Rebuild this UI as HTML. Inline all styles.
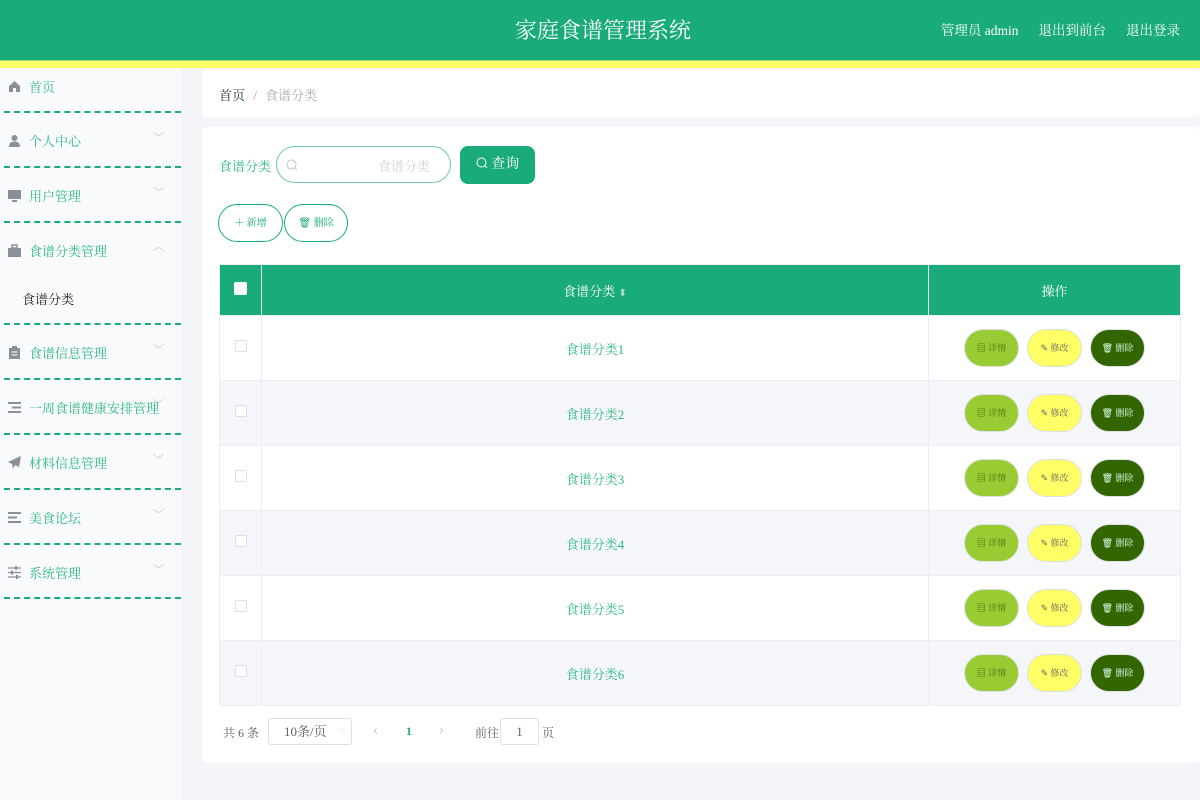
<!DOCTYPE html>
<html><head><meta charset="utf-8"><style>
*{box-sizing:border-box;margin:0;padding:0}
body{width:1200px;height:800px;overflow:hidden;background:#f4f5f8;font-family:"Liberation Serif","Noto Serif CJK SC","Noto Sans CJK SC",serif;position:relative}
.hd{position:absolute;left:0;top:0;width:1200px;height:60px;background:#1aab7b;color:#fff}
.hd .t{position:absolute;left:0;width:1206px;text-align:center;top:14px;font-size:22px}
.hd .r{position:absolute;right:20px;top:19px;font-size:13.5px}
.hd .r span{margin-left:20px}
.ys{position:absolute;top:60px;left:0;width:1200px;height:8px;background:#ffff66;border-top:1px solid #9cd66e}
.sb{position:absolute;left:0;top:68px;width:181px;height:732px;background:#f9fafb}
.it{position:absolute;left:0;width:181px;height:20px;font-size:13px;color:#2fb886}
.it .ic{position:absolute;left:8px;top:2px;width:13px;height:13px}
.it .tx{position:absolute;left:29px;top:-1px}
.it .ch{position:absolute;left:154px;top:-2px;color:#aaa;font-size:9px;transform:scaleX(1.3)}
.dl{position:absolute;left:4px;width:177px;border-top:2px dashed #1aab7b}
.card{position:absolute;background:#fff;border-radius:4px}
.lbl{position:absolute;font-size:13px}
table{border-collapse:collapse;position:absolute;left:219px;top:264px;width:962px;font-size:13px}
td,th{border:1px solid #ebeef5;text-align:center}
th{background:#1aab7b;color:#fff;height:51px;font-weight:normal}
td{height:65px;color:#2fb886}
tr:nth-child(odd) td{background:#f4f6fa}
.cb{display:inline-block;width:12px;height:12px;border:1px solid #dcdfe6;border-radius:2px;background:#fff}
.b{display:inline-block;width:55px;height:38px;border-radius:19px;line-height:36px;font-size:9px;margin:0 4px;border:1px solid #dcdfe6;vertical-align:middle}
</style></head><body>
<div class="hd"><div class="t">家庭食谱管理系统</div><div class="r"><span>管理员 admin</span><span>退出到前台</span><span>退出登录</span></div></div>
<div class="ys"></div>
<div class="sb"></div>
<div class="it" style="top:78px"><svg class="ic" viewBox="0 0 13 13"><path d="M1 6L6.5 1 12 6V12H8V8H5V12H1Z" fill="#8a8f99"/></svg><span class="tx">首页</span></div>
<div class="dl" style="top:111px"></div>
<div class="it" style="top:132px"><svg class="ic" viewBox="0 0 13 13"><circle cx="6.5" cy="4" r="3" fill="#8a8f99"/><path d="M1 13Q1 7.5 6.5 7.5 12 7.5 12 13Z" fill="#8a8f99"/></svg><span class="tx">个人中心</span><span class="ch">﹀</span></div>
<div class="dl" style="top:166px"></div>
<div class="it" style="top:187px"><svg class="ic" viewBox="0 0 13 13"><rect x="0" y="1" width="13" height="9" fill="#8a8f99"/><rect x="4" y="11" width="5" height="2" fill="#8a8f99"/></svg><span class="tx">用户管理</span><span class="ch">﹀</span></div>
<div class="dl" style="top:221px"></div>
<div class="it" style="top:242px"><svg class="ic" viewBox="0 0 13 13"><rect x="0" y="4" width="13" height="9" fill="#8a8f99"/><rect x="4" y="1" width="5" height="3" fill="none" stroke="#8a8f99" stroke-width="1.5"/></svg><span class="tx">食谱分类管理</span><span class="ch">︿</span></div>
<div class="it" style="top:290px;color:#222"><span class="tx" style="left:22px">食谱分类</span></div>
<div class="dl" style="top:323px"></div>
<div class="it" style="top:344px"><svg class="ic" viewBox="0 0 13 13"><rect x="1" y="2" width="11" height="11" fill="#8a8f99"/><rect x="4" y="0" width="5" height="3" fill="#8a8f99"/><path d="M3.5 6H9.5M3.5 9H9.5" stroke="#fff"/></svg><span class="tx">食谱信息管理</span><span class="ch">﹀</span></div>
<div class="dl" style="top:378px"></div>
<div class="it" style="top:399px"><svg class="ic" viewBox="0 0 13 13"><path d="M0 2H13M4 6.5H13M0 11H13" stroke="#8a8f99" stroke-width="2"/></svg><span class="tx">一周食谱健康安排管理</span><span class="ch">﹀</span></div>
<div class="dl" style="top:433px"></div>
<div class="it" style="top:454px"><svg class="ic" viewBox="0 0 13 13"><path d="M13 0L0 6 4 8 5 13 7 9 11 11Z" fill="#8a8f99"/></svg><span class="tx">材料信息管理</span><span class="ch">﹀</span></div>
<div class="dl" style="top:488px"></div>
<div class="it" style="top:509px"><svg class="ic" viewBox="0 0 13 13"><path d="M0 2H13M0 6.5H9M0 11H13" stroke="#8a8f99" stroke-width="2"/></svg><span class="tx">美食论坛</span><span class="ch">﹀</span></div>
<div class="dl" style="top:543px"></div>
<div class="it" style="top:564px"><svg class="ic" viewBox="0 0 13 13"><path d="M0 2H13M0 6.5H13M0 11H13" stroke="#8a8f99" stroke-width="1.3"/><path d="M8 0V4M4 4.5V8.5M9 9V13" stroke="#8a8f99" stroke-width="2"/></svg><span class="tx">系统管理</span><span class="ch">﹀</span></div>
<div class="dl" style="top:597px"></div>

<div class="card" style="left:202px;top:70px;width:998px;height:47px"></div>
<div class="lbl" style="left:219px;top:85px;color:#303133">首页 <span style="color:#f56c6c;margin:0 5px">/</span> <span style="color:#a8abb2">食谱分类</span></div>
<div class="card" style="left:202px;top:127px;width:998px;height:636px"></div>
<div class="lbl" style="left:219px;top:156px;color:#2fb886">食谱分类</div>
<div style="position:absolute;left:276px;top:146px;width:175px;height:37px;border:1px solid #6fcaa8;border-radius:19px;background:#fff"><svg style="position:absolute;left:9px;top:12px" width="12" height="12" viewBox="0 0 12 12"><circle cx="5.5" cy="5.5" r="4.5" fill="none" stroke="#c0c4cc"/><path d="M9 9L11 11" stroke="#c0c4cc"/></svg><span style="position:absolute;left:101px;top:9px;font-size:13px;color:#d0d3d9">食谱分类</span></div>
<div style="position:absolute;left:460px;top:146px;width:75px;height:38px;background:#1aab7b;border-radius:8px;color:#fff;font-size:14px;line-height:38px;text-align:center"><svg width="12" height="12" viewBox="0 0 12 12" style="vertical-align:-1px"><circle cx="5.5" cy="5.5" r="4.5" fill="none" stroke="#fff"/><path d="M9 9L11 11" stroke="#fff"/></svg> 查询</div>
<div style="position:absolute;left:218px;top:204px;width:65px;height:38px;border:1px solid #1aab7b;border-radius:19px;color:#1aab7b;font-size:10px;line-height:38px;text-align:center;background:#fff">＋ 新增</div>
<div style="position:absolute;left:284px;top:204px;width:64px;height:38px;border:1px solid #1aab7b;border-radius:19px;color:#1aab7b;font-size:10px;line-height:38px;text-align:center;background:#fff">🗑 删除</div>

<table>
<tr><th style="width:42px"><span class="cb" style="width:13px;height:13px;border:none"></span></th><th style="width:667px">食谱分类 <span style="color:#b5e0cf;font-size:10px">⬍</span></th><th>操作</th></tr>
<tr><td><span class="cb"></span></td><td>食谱分类1</td><td><span class="b" style="background:#99cc33;color:#4a6b14">▤ 详情</span><span class="b" style="background:#ffff66;color:#666">✎ 修改</span><span class="b" style="background:#336600;color:#dfe">🗑 删除</span></td></tr>
<tr><td><span class="cb"></span></td><td>食谱分类2</td><td><span class="b" style="background:#99cc33;color:#4a6b14">▤ 详情</span><span class="b" style="background:#ffff66;color:#666">✎ 修改</span><span class="b" style="background:#336600;color:#dfe">🗑 删除</span></td></tr>
<tr><td><span class="cb"></span></td><td>食谱分类3</td><td><span class="b" style="background:#99cc33;color:#4a6b14">▤ 详情</span><span class="b" style="background:#ffff66;color:#666">✎ 修改</span><span class="b" style="background:#336600;color:#dfe">🗑 删除</span></td></tr>
<tr><td><span class="cb"></span></td><td>食谱分类4</td><td><span class="b" style="background:#99cc33;color:#4a6b14">▤ 详情</span><span class="b" style="background:#ffff66;color:#666">✎ 修改</span><span class="b" style="background:#336600;color:#dfe">🗑 删除</span></td></tr>
<tr><td><span class="cb"></span></td><td>食谱分类5</td><td><span class="b" style="background:#99cc33;color:#4a6b14">▤ 详情</span><span class="b" style="background:#ffff66;color:#666">✎ 修改</span><span class="b" style="background:#336600;color:#dfe">🗑 删除</span></td></tr>
<tr><td><span class="cb"></span></td><td>食谱分类6</td><td><span class="b" style="background:#99cc33;color:#4a6b14">▤ 详情</span><span class="b" style="background:#ffff66;color:#666">✎ 修改</span><span class="b" style="background:#336600;color:#dfe">🗑 删除</span></td></tr>
</table>

<div class="lbl" style="left:223px;top:724px;color:#606266;font-size:12px">共 6 条</div>
<div style="position:absolute;left:268px;top:718px;width:84px;height:27px;border:1px solid #dcdfe6;border-radius:3px;font-size:13px;color:#606266;line-height:25px;padding-left:15px">10条/页<span style="position:absolute;right:6px;top:1px;color:#c0c4cc;font-size:8px">﹀</span></div>
<div class="lbl" style="left:373px;top:722px;color:#c0c4cc;font-size:15px">‹</div>
<div class="lbl" style="left:406px;top:724px;color:#1aab7b;font-size:12px;font-weight:bold">1</div>
<div class="lbl" style="left:439px;top:722px;color:#c0c4cc;font-size:15px">›</div>
<div class="lbl" style="left:475px;top:724px;color:#606266;font-size:12px">前往</div>
<div style="position:absolute;left:500px;top:718px;width:39px;height:27px;border:1px solid #dcdfe6;border-radius:3px;font-size:13px;color:#606266;line-height:25px;text-align:center">1</div>
<div class="lbl" style="left:542px;top:724px;color:#606266;font-size:12px">页</div>
</body></html>
